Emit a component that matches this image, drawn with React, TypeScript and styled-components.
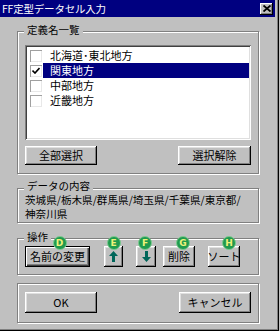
import React from "react";
import styled, { createGlobalStyle } from "styled-components";

const Global = createGlobalStyle`
  html, body { margin: 0; padding: 0; background: #c0c0c0; }
  body {
    font-family: "Noto Sans CJK JP", "Liberation Sans", sans-serif;
    font-size: 11px;
    color: #000;
  }
  * { box-sizing: border-box; }
`;

const Window = styled.div`
  width: 279px;
  height: 331px;
  background: #c0c0c0;
  box-shadow: inset -1px -1px #000, inset -2px -2px #808080;
  display: flex;
  flex-direction: column;
`;

const TitleBar = styled.div`
  width: 275px;
  height: 17px;
  background: #000080;
  color: #fff;
  display: flex;
  align-items: center;
  justify-content: space-between;
  padding: 0 2px 0 2px;
  font-size: 10.5px;
  line-height: 17px;
`;

const TitleText = styled.span`
  letter-spacing: -0.2px;
`;

const CloseButton = styled.div`
  width: 13px;
  height: 12px;
  background: #c0c0c0;
  box-shadow: inset -1px -1px #000, inset 1px 1px #fff, inset -2px -2px #808080;
  display: flex;
  align-items: center;
  justify-content: center;
`;

const Body = styled.div`
  display: flex;
  flex-direction: column;
  padding: 0 0 0 17px;
`;

const Group = styled.div<{ $mt: number; $pt: number; $pb: number }>`
  position: relative;
  width: 242px;
  margin-top: ${(p) => p.$mt}px;
  padding: ${(p) => p.$pt}px 7px ${(p) => p.$pb}px 7px;
  border: 1px solid #808080;
  box-shadow: inset 1px 1px #fff, 1px 1px #fff;
`;

const GroupLabel = styled.span<{ $top?: number }>`
  position: absolute;
  top: ${(p) => p.$top ?? -8}px;
  left: 6px;
  padding: 0 3px;
  background: #c0c0c0;
  line-height: 11px;
  height: 11px;
  font-size: 10.5px;
  white-space: nowrap;
`;

const ListBox = styled.div`
  height: 95px;
  background: #fff;
  box-shadow: inset 1px 1px #808080, inset -1px -1px #fff, inset 2px 2px #404040,
    inset -2px -2px #dfdfdf;
  padding: 3px 2px 2px 2px;
  display: flex;
  flex-direction: column;
`;

const Row = styled.div`
  height: 15px;
  display: flex;
  align-items: center;
`;

const CheckBox = styled.div`
  width: 12px;
  height: 12px;
  margin-left: 3px;
  background: #fff;
  box-shadow: inset 1px 1px #a0a0a0, inset -1px -1px #e8e8e8;
  display: flex;
  align-items: center;
  justify-content: center;
  flex-shrink: 0;
`;

const RowLabel = styled.div<{ $selected?: boolean }>`
  flex: 1;
  height: 15px;
  margin-left: 1px;
  padding-left: 7px;
  line-height: 15px;
  background: ${(p) => (p.$selected ? "#000080" : "transparent")};
  color: ${(p) => (p.$selected ? "#fff" : "#000")};
  white-space: nowrap;
`;

const ButtonRow = styled.div<{ $mt: number }>`
  display: flex;
  align-items: flex-start;
  margin-top: ${(p) => p.$mt}px;
`;

const Button = styled.div<{ $w: number; $h: number; $ml?: number; $focus?: boolean }>`
  position: relative;
  width: ${(p) => p.$w}px;
  height: ${(p) => p.$h}px;
  margin-left: ${(p) => p.$ml ?? 0}px;
  background: #c0c0c0;
  display: flex;
  align-items: center;
  justify-content: center;
  line-height: 1;
  white-space: nowrap;
  flex-shrink: 0;
  box-shadow: ${(p) =>
    p.$focus
      ? "inset 1px 1px #000, inset -1px -1px #000, inset 2px 2px #fff, inset -2px -2px #404040, inset -3px -3px #808080"
      : "inset -1px -1px #000, inset 1px 1px #fff, inset -2px -2px #808080, inset 2px 2px #dfdfdf"};
`;

const Spacer = styled.div`
  flex: 1;
`;

const Content = styled.div`
  line-height: 14px;
  font-size: 10.6px;
  white-space: nowrap;
`;

const Badge = styled.div<{ $dx: number }>`
  position: absolute;
  top: -10px;
  left: calc(50% + ${(p) => p.$dx}px - 7px);
  width: 14px;
  height: 14px;
  border-radius: 50%;
  background: #1f9a4e;
  border: 1px solid #7cc98e;
  color: #eef27a;
  font-family: "DejaVu Sans", "Liberation Sans", sans-serif;
  font-weight: bold;
  font-size: 9px;
  line-height: 12px;
  text-align: center;
`;

const Arrow = ({ down }: { down?: boolean }) => (
  <svg width="9" height="11" viewBox="0 0 9 11" style={down ? { transform: "rotate(180deg)" } : undefined}>
    <polygon points="4.5,0 9,5 6,5 6,11 3,11 3,5 0,5" fill="#00665a" />
  </svg>
);

const items = ["北海道･東北地方", "関東地方", "中部地方", "近畿地方"];

export default function App() {
  return (
    <>
      <Global />
      <Window>
        <TitleBar>
          <TitleText>FF定型データセル入力</TitleText>
          <CloseButton>
            <svg width="8" height="7" viewBox="0 0 8 7">
              <path d="M0.5 0.5 L7.5 6.5 M7.5 0.5 L0.5 6.5" stroke="#000" strokeWidth="1.8" />
            </svg>
          </CloseButton>
        </TitleBar>
        <Body>
          <Group $mt={14} $pt={13} $pb={8}>
            <GroupLabel>定義名一覧</GroupLabel>
            <ListBox>
              {items.map((t, i) => (
                <Row key={t}>
                  <CheckBox>
                    {i === 1 && (
                      <svg width="8" height="7" viewBox="0 0 8 7">
                        <path d="M0.5 3.5 L3 6 L7.5 1" stroke="#000" strokeWidth="1.6" fill="none" />
                      </svg>
                    )}
                  </CheckBox>
                  <RowLabel $selected={i === 1}>{t}</RowLabel>
                </Row>
              ))}
            </ListBox>
            <ButtonRow $mt={6}>
              <Button $w={72} $h={19}>全部選択</Button>
              <Spacer />
              <Button $w={73} $h={19}>選択解除</Button>
            </ButtonRow>
          </Group>

          <Group $mt={14} $pt={4} $pb={1}>
            <GroupLabel $top={-9}>データの内容</GroupLabel>
            <Content>
              茨城県/栃木県/群馬県/埼玉県/千葉県/東京都/
              <br />
              神奈川県
            </Content>
          </Group>

          <Group $mt={15} $pt={7} $pb={7}>
            <GroupLabel>操作</GroupLabel>
            <ButtonRow $mt={0}>
              <Button $w={65} $h={21} $focus>
                名前の変更
                <Badge $dx={2}>D</Badge>
              </Button>
              <Button $w={19} $h={21} $ml={14}>
                <Arrow />
                <Badge $dx={0}>E</Badge>
              </Button>
              <Button $w={20} $h={21} $ml={13}>
                <Arrow down />
                <Badge $dx={-1}>F</Badge>
              </Button>
              <Button $w={32} $h={21} $ml={7}>
                削除
                <Badge $dx={4}>G</Badge>
              </Button>
              <Button $w={32} $h={21} $ml={13}>
                ソート
                <Badge $dx={5}>H</Badge>
              </Button>
            </ButtonRow>
          </Group>

          <Group $mt={8} $pt={8} $pb={9}>
            <ButtonRow $mt={0}>
              <Button $w={72} $h={21}>OK</Button>
              <Spacer />
              <Button $w={72} $h={21}>キャンセル</Button>
            </ButtonRow>
          </Group>
        </Body>
      </Window>
    </>
  );
}
